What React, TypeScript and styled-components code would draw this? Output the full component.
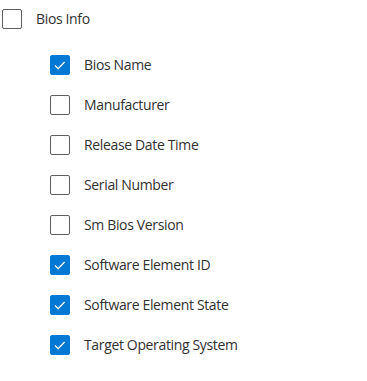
import React, { useState } from 'react';
import styled, { createGlobalStyle } from 'styled-components';

const GlobalStyle = createGlobalStyle`
  body {
    margin: 0;
    background: #ffffff;
    font-family: 'Open Sans', 'Noto Sans', sans-serif;
  }
`;

interface Field {
  name: string;
  checked: boolean;
}

const Tree = styled.div`
  display: flex;
  flex-direction: column;
  width: 367px;
`;

const Row = styled.label<{ $indent: number; $height: number }>`
  display: flex;
  align-items: center;
  gap: 14px;
  height: ${(p) => p.$height}px;
  padding-left: ${(p) => p.$indent}px;
  cursor: pointer;
`;

const Box = styled.span<{ $checked: boolean }>`
  position: relative;
  box-sizing: border-box;
  width: 20px;
  height: 20px;
  border-radius: 2px;
  border: 1px solid ${(p) => (p.$checked ? '#0078d4' : '#605e5c')};
  background: ${(p) => (p.$checked ? '#0078d4' : '#ffffff')};
  flex-shrink: 0;

  svg {
    position: absolute;
    left: -1px;
    top: -1px;
  }
`;

const Text = styled.span`
  font-size: 14px;
  letter-spacing: -0.35px;
  color: #323130;
  line-height: 20px;
`;

const Children = styled.div`
  display: flex;
  flex-direction: column;
  margin-top: 7px;
`;

function CheckMark() {
  return (
    <svg width="20" height="20" viewBox="0 0 20 20">
      <polyline points="5,10.5 8.2,13.6 14.6,7" fill="none" stroke="#ffffff" strokeWidth="1.3" />
    </svg>
  );
}

function CheckRow({ label, checked, indent, height, onToggle }: {
  label: string;
  checked: boolean;
  indent: number;
  height: number;
  onToggle: () => void;
}) {
  return (
    <Row $indent={indent} $height={height} onClick={onToggle}>
      <Box $checked={checked}>{checked && <CheckMark />}</Box>
      <Text>{label}</Text>
    </Row>
  );
}

export default function App(): JSX.Element {
  const [fields, setFields] = useState<Field[]>([
    { name: 'Bios Name', checked: true },
    { name: 'Manufacturer', checked: false },
    { name: 'Release Date Time', checked: false },
    { name: 'Serial Number', checked: false },
    { name: 'Sm Bios Version', checked: false },
    { name: 'Software Element ID', checked: true },
    { name: 'Software Element State', checked: true },
    { name: 'Target Operating System', checked: true },
  ]);
  const [rootChecked, setRootChecked] = useState(false);

  const toggle = (i: number) =>
    setFields((prev) => prev.map((f, j) => (j === i ? { ...f, checked: !f.checked } : f)));

  return (
    <>
      <GlobalStyle />
      <Tree>
        <CheckRow label="Bios Info" checked={rootChecked} indent={2} height={38} onToggle={() => setRootChecked(!rootChecked)} />
        <Children>
          {fields.map((f, i) => (
            <CheckRow key={f.name} label={f.name} checked={f.checked} indent={50} height={40} onToggle={() => toggle(i)} />
          ))}
        </Children>
      </Tree>
    </>
  );
}
